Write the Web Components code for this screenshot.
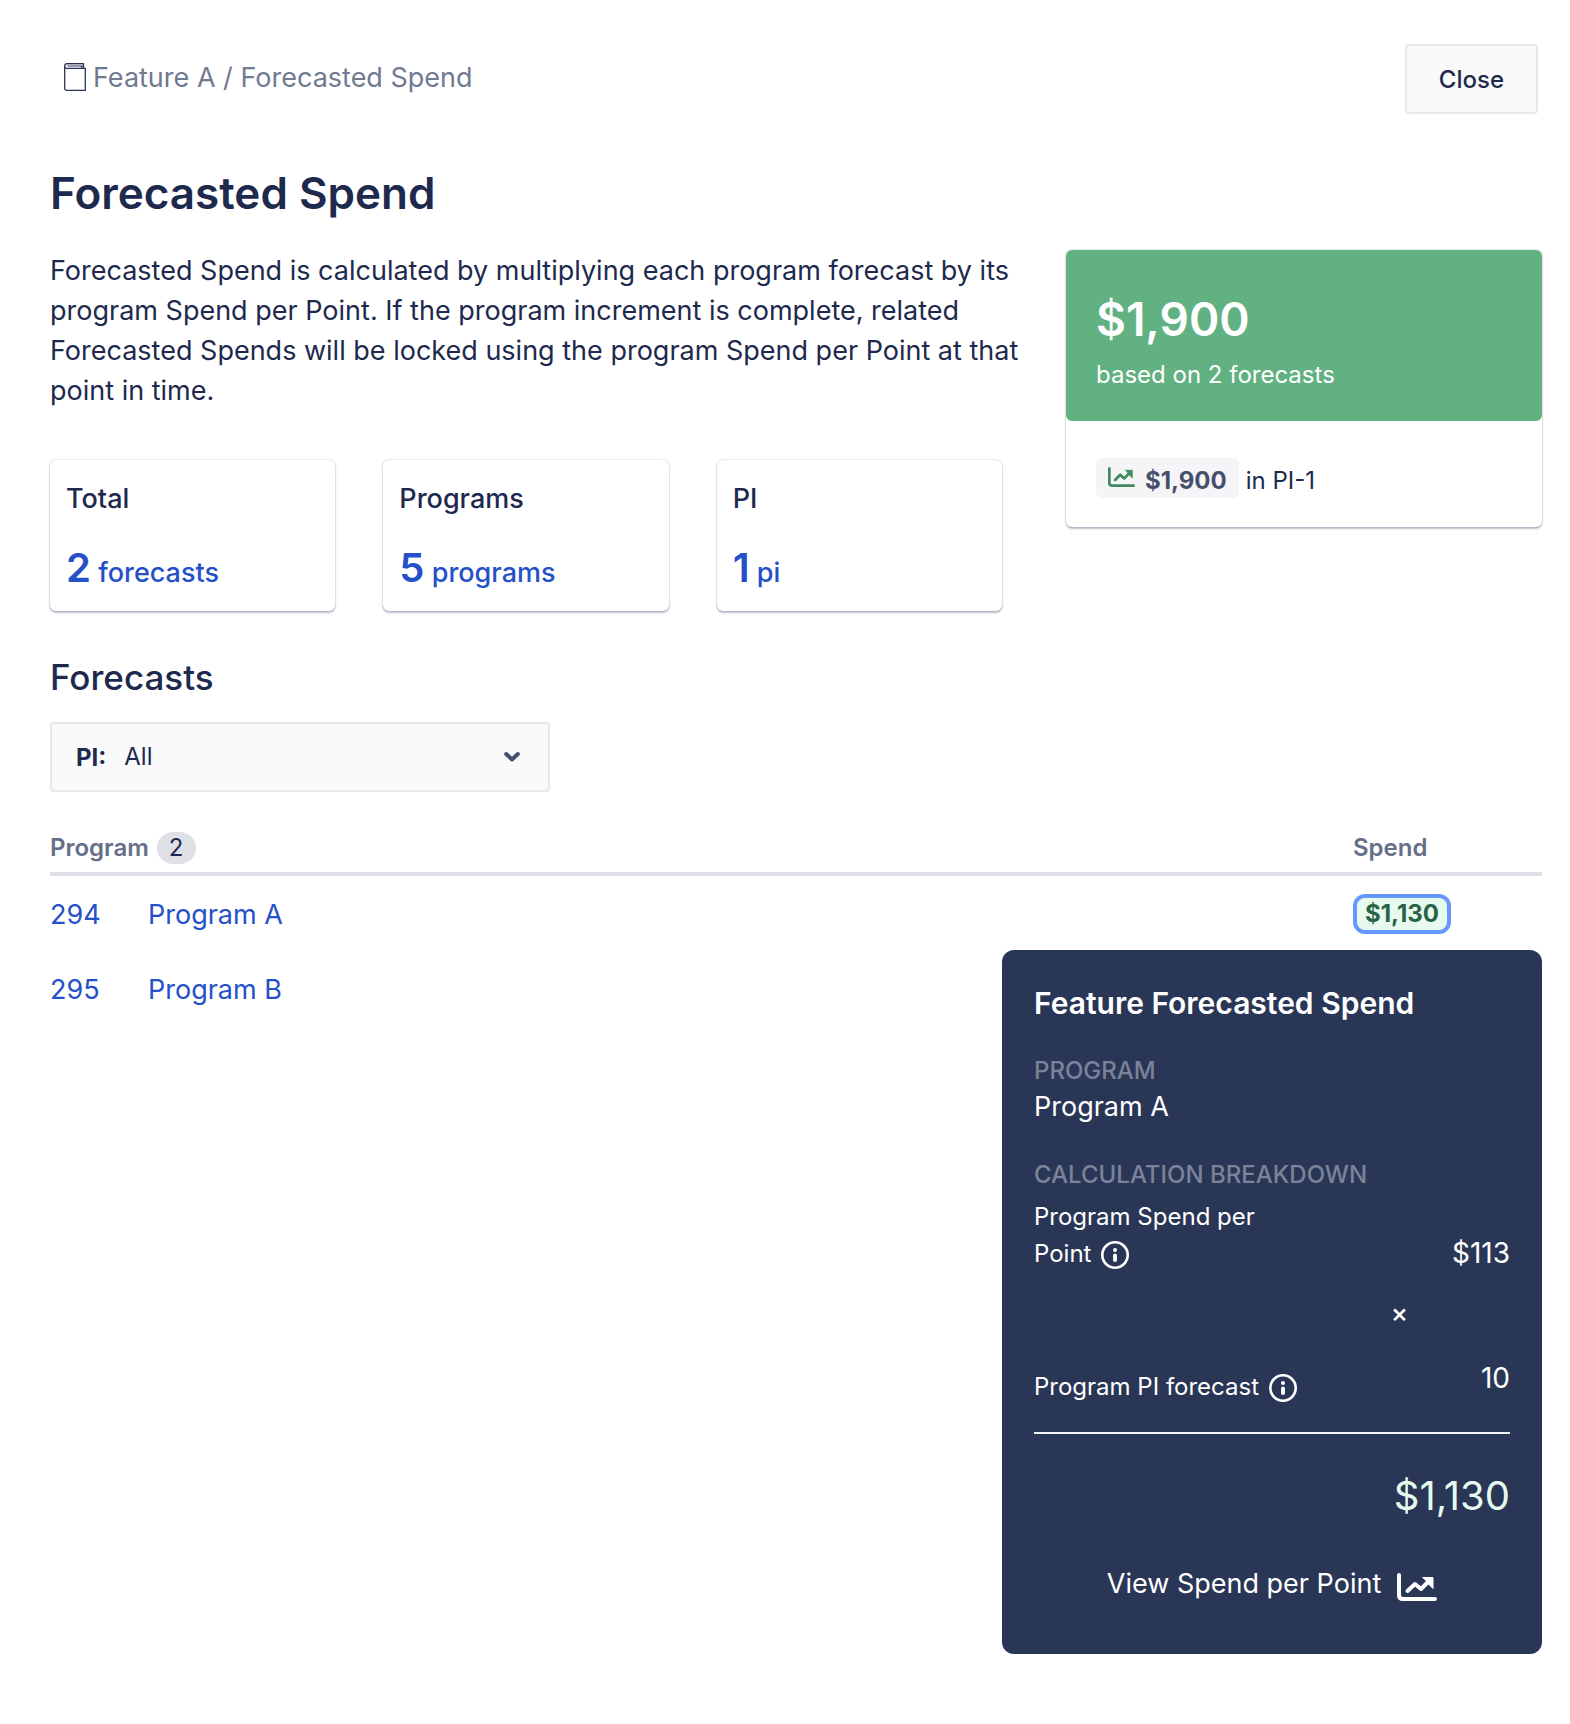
<!DOCTYPE html>
<html lang="en">
<head>
<meta charset="utf-8">
<meta name="viewport" content="width=device-width, initial-scale=1">
<title>Forecasted Spend</title>
<style>
  body {
    margin: 0;
    background: #fff;
    color: #1d2a4d;
    font: 400 27px/40px Inter, "Liberation Sans", sans-serif;
    --ink: #1d2a4d;
    --link: #2450c8;
    --muted: #707a91;
    --card-shadow: 0 0 2px rgba(9, 20, 66, .28), 0 2px 2px rgba(9, 20, 66, .25);
  }
</style>
</head>
<body>
<forecast-page></forecast-page>

<script>
const define = (name, markup) => {
  const template = document.createElement('template');
  template.innerHTML = `<style>*{box-sizing:border-box}</style>${markup}`;
  customElements.define(name, class extends HTMLElement {
    constructor() {
      super();
      this.attachShadow({ mode: 'open' }).append(template.content.cloneNode(true));
    }
  });
};

define('book-icon', `
  <style>:host{display:block;flex:none;width:22px;height:28px} svg{display:block}</style>
  <svg width="22" height="28" viewBox="0 0 22 28" fill="none" stroke="#2a3454" aria-hidden="true">
    <path d="M19.5 5V.7H3Q.7.7.7 3V25.5Q.7 27.3 2.5 27.3H21.3V5.3H2.8Q.9 5.3.9 3.4" stroke-width="1.3"/>
    <path d="M19.5 3H3.5M17.7 5V3" stroke-width="1.1"/>
    <path d="M2.4 1.8H19" stroke="#9aa1b2" stroke-width="1"/>
  </svg>`);

define('chart-icon', `
  <style>:host{display:inline-block;flex:none;width:27px;height:20px} svg{display:block;width:100%;height:100%}</style>
  <svg viewBox="0 0 40 28" preserveAspectRatio="none" fill="none" stroke="currentColor" stroke-width="4" stroke-linecap="round" stroke-linejoin="round" aria-hidden="true">
    <path d="M2 2V22Q2 26 6 26H38"/>
    <path d="M10.5 18L18 11L24 16L32 8"/>
    <path d="M26 4.5H36V15.5L32.5 12L29.5 8Z" fill="currentColor" stroke-width="1"/>
  </svg>`);

define('info-button', `
  <style>
    :host{display:inline-block;width:28px;height:28px;vertical-align:-7px}
    button{display:block;width:28px;height:28px;padding:0;border:0;background:none;color:inherit}
    svg{display:block}
  </style>
  <button type="button" aria-label="More information">
    <svg width="28" height="28" viewBox="0 0 28 28" fill="none" stroke="currentColor" aria-hidden="true">
      <circle cx="14" cy="14" r="12.7" stroke-width="2.6"/>
      <path d="M14 14.5V19" stroke-width="4" stroke-linecap="round"/>
      <circle cx="14" cy="9" r="2" fill="currentColor" stroke="none"/>
    </svg>
  </button>`);

define('page-breadcrumb', `
  <style>
    :host{display:block;color:var(--muted)}
    nav{display:flex;align-items:center;gap:7px}
    .trail{padding-top:2px}
    a{color:inherit;text-decoration:none}
  </style>
  <nav aria-label="Breadcrumb"><book-icon></book-icon><span class="trail"><a href="#feature"><slot name="parent"></slot></a> / <slot></slot></span></nav>`);

define('plain-button', `
  <style>
    :host{display:block}
    button{height:70px;padding:2px 32px 0;border:2px solid #e8e8e9;border-radius:4px;background:#fafafa;color:var(--ink);font:500 24px/32px Inter,"Liberation Sans",sans-serif}
  </style>
  <button type="button"><slot></slot></button>`);

define('stat-card', `
  <style>
    :host{display:flex;flex-direction:column;gap:29px;height:151px;padding:19px 16px;border-radius:6px;background:#fff;box-shadow:var(--card-shadow);font-weight:500;font-size:27px}
    .value{color:var(--link)}
    ::slotted([slot=count]){font-size:40px;font-weight:600}
  </style>
  <div><slot name="label"></slot></div>
  <div class="value"><slot name="count"></slot> <slot></slot></div>`);

define('spend-summary', `
  <style>
    :host{display:block;border-radius:6px;box-shadow:var(--card-shadow);font-size:24px}
    .top{display:flex;flex-direction:column;gap:8px;padding:41px 30px 25px;border-radius:6px;background:#62b182;color:#fff;height:171px}
    .top strong{font-size:46px;line-height:56px;font-weight:600}
    .bottom{display:flex;align-items:center;gap:7px;height:106px;padding:8px 30px 0}
    .chip{display:flex;align-items:center;gap:10px;height:40px;padding:5px 12px 0;border-radius:6px;background:#f5f5f8;color:#46506c;font-weight:700}
    .period{padding-top:5px}
    chart-icon{color:#3f8b5c;margin-bottom:7px}
  </style>
  <div class="top"><strong><slot name="amount"></slot></strong><span><slot name="note"></slot></span></div>
  <div class="bottom"><span class="chip"><chart-icon></chart-icon><slot name="part"></slot></span><span class="period"><slot name="period"></slot></span></div>`);

define('pi-filter', `
  <style>
    :host{display:grid;grid-template-columns:auto 1fr auto;align-items:center;width:500px;max-width:100%;height:70px;border:2px solid #e8e8e9;border-radius:4px;background:#fafafa;font-size:24px;line-height:32px}
    label{grid-area:1/1;padding:2px 0 0 24px;font-weight:700}
    select{grid-area:1/2/2/4;align-self:stretch;appearance:none;border:0;background:none;padding:0 0 0 18px;color:inherit;font:inherit}
    svg{grid-area:1/3;margin-right:28px;pointer-events:none}
  </style>
  <label for="pi">PI:</label>
  <select id="pi"><option>All</option><option>PI-1</option></select>
  <svg width="16" height="12" viewBox="0 0 16 12" fill="none" stroke="#46506c" stroke-width="4" stroke-linecap="round" stroke-linejoin="round" aria-hidden="true"><path d="M2.2 3L8 8.5L13.8 3"/></svg>`);

define('spend-tooltip', `
  <style>
    :host{display:block;width:540px;padding:32px 32px 50px;border-radius:12px;background:#2a3655;color:#fff;font-weight:400;font-size:24px;line-height:37px}
    h3{margin:0 0 31px;font-size:30px;line-height:42px;font-weight:600}
    .label{color:#7a8399;font-size:24px;line-height:32px;font-weight:500}
    .name{font-size:27px;line-height:40px;margin-bottom:32px}
    .line{display:flex;justify-content:space-between;align-items:flex-end}
    .rate{margin-top:7px}
    .rate .term{max-width:250px}
    .num{font-size:28px;line-height:38px}
    .times{display:block;margin:22px 102px 28px 0;text-align:right;font-size:26px;font-weight:500}
    .points{align-items:flex-start}
    .points .term{padding-top:9px}
    .total{margin-top:27px;padding-top:36px;border-top:2px solid #f2f3f5;text-align:right;color:#e5fbef;font-size:40px;line-height:52px}
    a{display:flex;justify-content:center;gap:16px;margin-top:42px;color:inherit;text-decoration:none;font-size:27px;line-height:40px}
    a chart-icon{width:40px;height:28px;margin-top:9px}
    info-button{margin-left:3px}
  </style>
  <h3>Feature Forecasted Spend</h3>
  <div class="label">PROGRAM</div>
  <div class="name"><slot name="program"></slot></div>
  <div class="label">CALCULATION BREAKDOWN</div>
  <div class="line rate"><span class="term">Program Spend per Point <info-button></info-button></span><span class="num"><slot name="rate"></slot></span></div>
  <span class="times">×</span>
  <div class="line points"><span class="term">Program PI forecast <info-button></info-button></span><span class="num"><slot name="points"></slot></span></div>
  <div class="total"><slot name="total"></slot></div>
  <a href="#spend-per-point">View Spend per Point <chart-icon></chart-icon></a>`);

define('forecast-table', `
  <style>
    :host{display:block}
    table{width:100%;border-collapse:collapse;table-layout:fixed;text-align:left}
    .id{width:98px}.spend{width:189px}
    th{height:48px;padding:0 0 3px;border-bottom:4px solid #dfe0e6;color:#656f89;font-size:24px;line-height:32px;font-weight:600}
    td{height:76px;padding:4px 0 0}
    td.amount{padding:2px 0 0}
    .count{display:inline-block;margin-left:2px;padding:0 12px;border-radius:16px;background:#dfe0e6;color:var(--ink);font-weight:400}
    a{color:var(--link);text-decoration:none}
    .anchor{position:relative;display:flex}
    .anchor button{height:40px;padding:0 8px;border:4px solid #6698fb;border-radius:12px;background:#e6faee;color:#286345;font:700 24px/32px Inter,"Liberation Sans",sans-serif}
    spend-tooltip{position:absolute;top:calc(100% + 16px);right:0}
  </style>
  <table>
    <colgroup><col class="id"><col><col class="spend"></colgroup>
    <thead><tr><th colspan="2">Program <span class="count">2</span></th><th>Spend</th></tr></thead>
    <tbody>
      <tr>
        <td><a href="#294">294</a></td><td><a href="#294">Program A</a></td>
        <td class="amount"><div class="anchor"><button type="button">$1,130</button>
          <spend-tooltip role="tooltip"><span slot="program">Program A</span><span slot="rate">$113</span><span slot="points">10</span><span slot="total">$1,130</span></spend-tooltip></div></td>
      </tr>
      <tr><td><a href="#295">295</a></td><td><a href="#295">Program B</a></td><td></td></tr>
    </tbody>
  </table>`);

define('forecast-page', `
  <style>
    :host{display:block;min-height:100vh;padding:44px 28px 24px 50px}
    header{display:flex;justify-content:space-between;align-items:flex-start}
    page-breadcrumb{padding:12px 0 0 14px}
    plain-button{margin-right:4px}
    h1{margin:49px 0 28px;font-size:44px;line-height:60px;font-weight:600}
    h2{margin:45px 0 24px;font-size:35px;line-height:42px;font-weight:500}
    .overview{display:grid;grid-template-columns:minmax(0,1fr) 476px;gap:24px;align-items:start}
    spend-summary{margin-top:-1px}
    p{margin:0 0 49px}
    .stats{display:grid;grid-template-columns:repeat(3,1fr);gap:48px;padding-right:40px}
    forecast-table{margin-top:34px}
  </style>
  <header>
    <page-breadcrumb><span slot="parent">Feature A</span>Forecasted Spend</page-breadcrumb>
    <plain-button>Close</plain-button>
  </header>
  <main>
    <h1>Forecasted Spend</h1>
    <section class="overview">
      <div>
        <p>Forecasted Spend is calculated by multiplying each program forecast by its program Spend per Point. If the program increment is complete, related Forecasted Spends will be locked using the program Spend per Point at that point in time.</p>
        <div class="stats">
          <stat-card><span slot="label">Total</span><span slot="count">2</span>forecasts</stat-card>
          <stat-card><span slot="label">Programs</span><span slot="count">5</span>programs</stat-card>
          <stat-card><span slot="label">PI</span><span slot="count">1</span>pi</stat-card>
        </div>
      </div>
      <spend-summary><span slot="amount">$1,900</span><span slot="note">based on 2 forecasts</span><span slot="part">$1,900</span><span slot="period">in PI-1</span></spend-summary>
    </section>
    <h2>Forecasts</h2>
    <pi-filter></pi-filter>
    <forecast-table></forecast-table>
  </main>`);
</script>
</body>
</html>
